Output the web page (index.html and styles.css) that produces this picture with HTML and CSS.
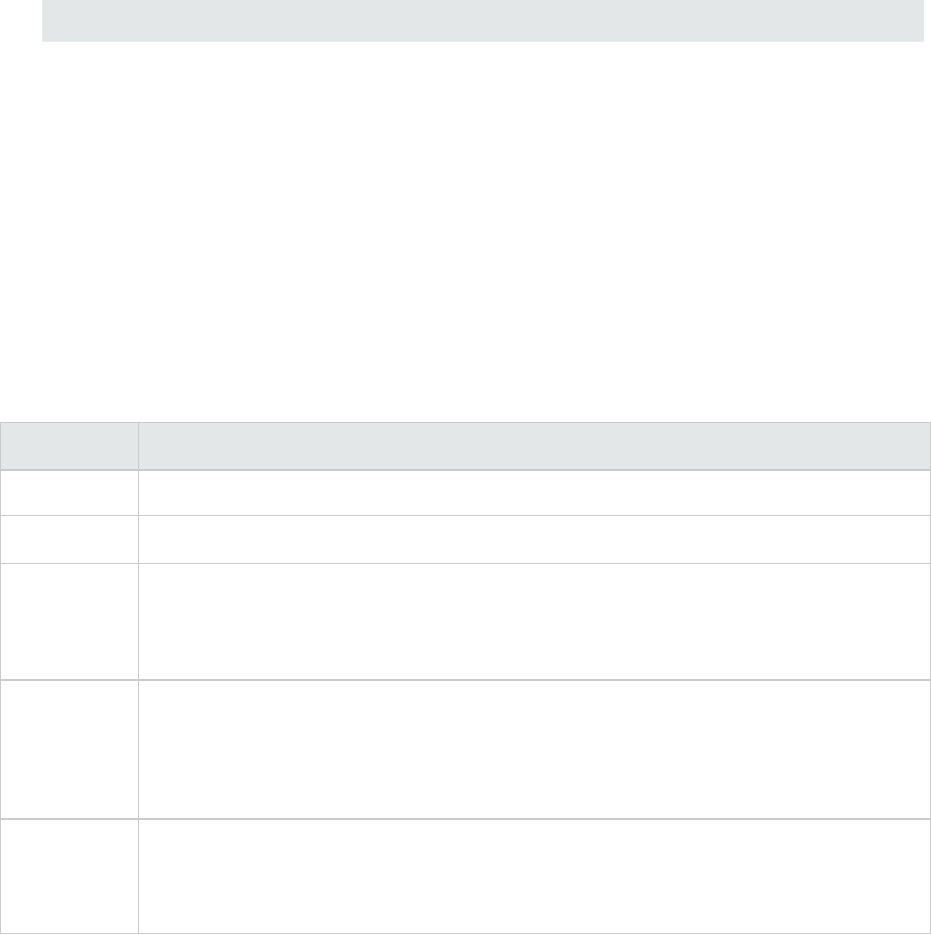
FILE: index.html
```html
<!DOCTYPE html>
<html lang="en">

<head>
    <meta charset="UTF-8">
    <meta name="viewport" content="width=device-width, initial-scale=1.0">
    <title>Table</title>
    <link rel="stylesheet" href="styles.css">
</head>

<body>
    <div class="top">
        <div class="note-bar"></div>
    </div>

    <table class="grid">
        <thead>
            <tr class="row-head">
                <th class="col-key"></th>
                <th></th>
            </tr>
        </thead>
        <tbody>
            <tr class="row-short">
                <td></td>
                <td></td>
            </tr>
            <tr class="row-short2">
                <td></td>
                <td></td>
            </tr>
            <tr class="row-tall sep">
                <td></td>
                <td></td>
            </tr>
            <tr class="row-taller sep">
                <td></td>
                <td></td>
            </tr>
            <tr class="row-last">
                <td></td>
                <td></td>
            </tr>
        </tbody>
    </table>
</body>

</html>
```

FILE: styles.css
```css
* {
    margin: 0;
    padding: 0;
    box-sizing: border-box;
    font-family: 'Liberation Sans', Arial, sans-serif;
}

body {
    background-color: #fff;
    width: 931px;
}

.top {
    padding: 0 7px 0 42px;
    margin-bottom: 380px;
}

.note-bar {
    height: 42px;
    background-color: #e3e7e8;
    border: 1px solid #e9ecec;
    border-top: none;
}

.grid {
    width: 100%;
    border-collapse: collapse;
    border: 1px solid #cbcbcb;
}

.grid th,
.grid td {
    border: 1px solid #cbcbcb;
    padding: 0;
}

.grid th {
    background-color: #e3e7e8;
}

.col-key {
    width: 138px;
}

.row-head th {
    height: 47px;
    border-bottom: 2px solid #cbcbcb;
}

.row-short td {
    height: 46px;
}

.row-short2 td {
    height: 48px;
}

.row-tall td {
    height: 116px;
}

.row-taller td {
    height: 139px;
}

.row-last td {
    height: 115px;
}

.sep td {
    border-bottom: 2px solid #cbcbcb;
}
```
